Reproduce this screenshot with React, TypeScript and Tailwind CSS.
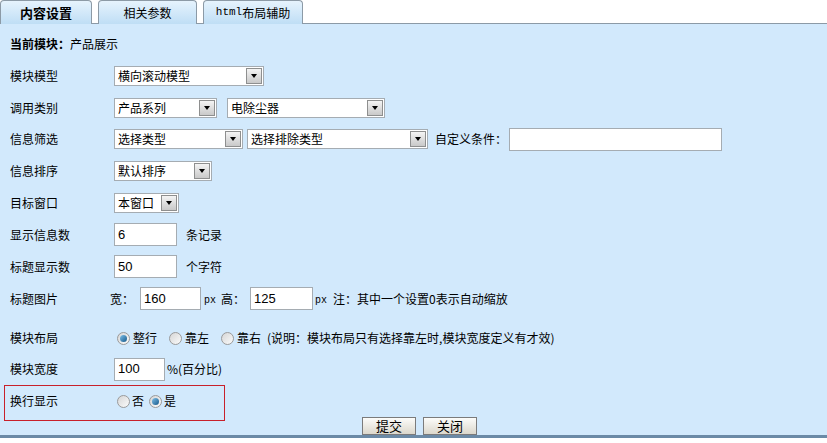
import React from 'react';

const font = "font-['SimSun','Noto_Sans_CJK_SC','Liberation_Sans',sans-serif]";

const Select: React.FC<{ value: string; width: string }> = ({ value, width }) => (
  <div className={`${width} h-[20px] flex items-center bg-white border border-[#a5acb2] shrink-0`}>
    <span className="flex-1 pl-[3px] whitespace-nowrap">{value}</span>
    <span className="w-[16px] h-[16px] mr-[1px] border border-[#8e8f8f] bg-gradient-to-b from-[#f4f4f4] to-[#c9c9c9] flex items-center justify-center">
      <span className="w-0 h-0 border-l-[3.5px] border-r-[3.5px] border-t-[4px] border-l-transparent border-r-transparent border-t-black" />
    </span>
  </div>
);

const Input: React.FC<{ value?: string; width: string; className?: string }> = ({ value = '', width, className = '' }) => (
  <div className={`${width} ${className} h-[23px] bg-white border border-[#a5acb2] flex items-center pl-[3px] shrink-0 font-['Liberation_Sans',sans-serif] text-[13px]`}>
    {value}
  </div>
);

const Radio: React.FC<{ checked?: boolean }> = ({ checked }) => (
  <span className="w-[13px] h-[13px] rounded-full border border-[#9a9a9a] bg-gradient-to-br from-[#d6d6d6] to-[#fbfbfb] flex items-center justify-center shrink-0">
    {checked && <span className="w-[7px] h-[7px] rounded-full bg-gradient-to-br from-[#7fc0e8] to-[#0f5a8c]" />}
  </span>
);

const Row: React.FC<{ label: string; h?: string; children?: React.ReactNode }> = ({ label, h = 'h-8', children }) => (
  <div className={`${h} flex items-center`}>
    <span className="w-[114px] pl-[10px] shrink-0">{label}</span>
    {children}
  </div>
);

const Tab: React.FC<{ label: React.ReactNode; w: string; active?: boolean }> = ({ label, w, active }) => (
  <div className={`${w} h-[24px] rounded-t-[4px] border border-b-0 border-[#8c9aa6] bg-gradient-to-b from-[#e6f3fd] to-[#bfdef5] flex items-center justify-center ${active ? 'font-bold text-[13px]' : ''}`}>
    {label}
  </div>
);

const Px = () => <span className="font-['Liberation_Mono',monospace] text-[10px]">px</span>;

export default function App() {
  return (
    <div className={`w-[827px] h-[443px] bg-white text-[12px] text-black ${font}`}>
      {/* tabs */}
      <div className="flex h-[24px] gap-[6px] border-b border-[#8c9aa6]">
        <Tab label="内容设置" w="w-[92px]" active />
        <Tab label="相关参数" w="w-[99px]" />
        <Tab label={<><span className="font-['Liberation_Mono',monospace] text-[11px]">html</span>布局辅助</>} w="w-[100px]" />
      </div>

      <div className="h-[414px] bg-[#d2e9fc] border-b-[3px] border-[#6b8aa6] flex flex-col pt-[4px]">
        <div className="h-8 flex items-center pl-[10px]">
          <span className="font-bold">当前模块：</span>产品展示
        </div>
        <Row label="模块模型">
          <Select value="横向滚动模型" width="w-[150px]" />
        </Row>
        <Row label="调用类别">
          <Select value="产品系列" width="w-[103px]" />
          <span className="w-[10px]" />
          <Select value="电除尘器" width="w-[158px]" />
        </Row>
        <Row label="信息筛选">
          <Select value="选择类型" width="w-[129px]" />
          <span className="w-[4px]" />
          <Select value="选择排除类型" width="w-[181px]" />
          <span className="ml-[7px] mr-[2px]">自定义条件：</span>
          <Input width="w-[213px]" />
        </Row>
        <Row label="信息排序">
          <Select value="默认排序" width="w-[98px]" />
        </Row>
        <Row label="目标窗口">
          <Select value="本窗口" width="w-[65px]" />
        </Row>
        <Row label="显示信息数">
          <Input value="6" width="w-[63px]" />
          <span className="ml-[9px]">条记录</span>
        </Row>
        <Row label="标题显示数">
          <Input value="50" width="w-[63px]" />
          <span className="ml-[9px]">个字符</span>
        </Row>
        <div className="h-8 flex items-center">
          <span className="w-[110px] pl-[10px] shrink-0">标题图片</span>
          <span>宽：</span>
          <Input value="160" width="w-[61px]" className="ml-[6px]" />
          <span className="ml-[3px]"><Px /></span>
          <span className="ml-[5px]">高：</span>
          <Input value="125" width="w-[63px]" className="ml-[5px]" />
          <span className="ml-[2px]"><Px /></span>
          <span className="ml-[6px]">注：其中一个设置0表示自动缩放</span>
        </div>
        <Row label="模块布局" h="h-8 mt-2">
          <span className="ml-[3px]"><Radio checked /></span>
          <span className="ml-[3px]">整行</span>
          <span className="ml-[12px]"><Radio /></span>
          <span className="ml-[3px]">靠左</span>
          <span className="ml-[12px]"><Radio /></span>
          <span className="ml-[3px]">靠右</span>
          <span className="ml-[6px]">(说明：模块布局只有选择靠左时,模块宽度定义有才效)</span>
        </Row>
        <Row label="模块宽度" h="h-[30px]">
          <Input value="100" width="w-[51px]" />
          <span className="ml-[2px]">%(百分比)</span>
        </Row>
        <div className="relative h-8 mt-[1px] flex items-center">
          <span className="w-[114px] pl-[10px] shrink-0">换行显示</span>
          <span className="ml-[3px]"><Radio /></span>
          <span className="ml-[2px]">否</span>
          <span className="ml-[5px]"><Radio checked /></span>
          <span className="ml-[2px]">是</span>
          <div className="absolute left-[4px] top-0 w-[221px] h-[36px] border border-[#c8202a] pointer-events-none" />
        </div>
        <div className="flex gap-[7px] pl-[362px]">
          <button className="w-[54px] h-[18px] border border-[#7b7b7b] bg-gradient-to-b from-[#fcfcfa] to-[#dcd8cc] text-[13px] leading-none">提交</button>
          <button className="w-[54px] h-[18px] border border-[#7b7b7b] bg-gradient-to-b from-[#fcfcfa] to-[#dcd8cc] text-[13px] leading-none">关闭</button>
        </div>
      </div>
    </div>
  );
}
